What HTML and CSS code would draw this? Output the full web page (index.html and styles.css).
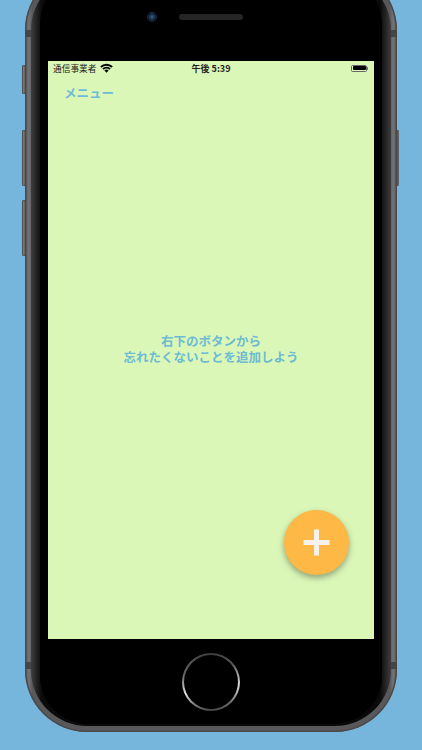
FILE: index.html
```html
<!DOCTYPE html>
<html lang="ja">
<head>
  <meta charset="UTF-8">
  <title>メニュー</title>
  <link rel="stylesheet" href="styles.css">
</head>
<body>

  <div class="phone">
    <div class="side-btn btn-mute"></div>
    <div class="side-btn btn-up"></div>
    <div class="side-btn btn-down"></div>
    <div class="side-btn btn-power"></div>
    <div class="band band-top"></div>
    <div class="band band-bottom"></div>

    <div class="phone-mid">
      <div class="phone-inner">
        <div class="top-bezel">
          <div class="camera"></div>
          <div class="speaker"></div>
        </div>

        <div class="screen">
          <div class="status-bar">
            <div class="status-left">
              <span>通信事業者</span>
              <svg class="wifi" width="13" height="10" viewBox="0 0 13 10">
                <path d="M0.2 3.3 A8.9 8.9 0 0 1 12.8 3.3 L11.4 4.7 A6.9 6.9 0 0 0 1.6 4.7 Z" fill="#000"/>
                <path d="M2.3 5.4 A5.9 5.9 0 0 1 10.7 5.4 L9.3 6.8 A3.9 3.9 0 0 0 3.7 6.8 Z" fill="#000"/>
                <path d="M4.4 7.5 A3 3 0 0 1 8.6 7.5 L6.5 9.7 Z" fill="#000"/>
              </svg>
            </div>
            <div class="status-time">午後 5:39</div>
            <div class="battery"><div class="battery-fill"></div></div>
          </div>

          <div class="nav-bar">
            <a class="menu-link">メニュー</a>
          </div>

          <p class="empty-message">右下のボタンから<br>忘れたくないことを追加しよう</p>

          <!-- 追加ボタン -->
          <div class="add-btn">
            <svg width="27" height="27" viewBox="0 0 27 27">
              <rect x="0.5" y="11" width="26" height="5" fill="#f6f1ea"/>
              <rect x="11" y="0.5" width="5" height="26" fill="#f6f1ea"/>
            </svg>
          </div>
        </div>

        <div class="bottom-bezel">
          <div class="home-btn"></div>
        </div>
      </div>
    </div>
  </div>

</body>
</html>
```

FILE: styles.css
```css
html, body {
  height: 100%;
}

body {
  margin: 0;
  background-color: #76b5dc;
  overflow: hidden;
  font-family: "Noto Sans CJK JP", "Liberation Sans", sans-serif;
}

p {
  margin: 0;
}

.phone {
  position: relative;
  box-sizing: border-box;
  width: 372px;
  height: 764px;
  margin: -32px 0 0 25px;
  padding: 6px;
  border-radius: 62px;
  background: linear-gradient(90deg, #58585a, #737376 1%, #58585a 2%, #58585a 98%, #737376 99%, #58585a);
  box-shadow: inset 0 0 0 1.5px #4a4a4c;
}

.phone-mid {
  height: 100%;
  padding: 2px 9px;
  box-sizing: border-box;
  border-radius: 56px;
  background: linear-gradient(90deg, #3e3e3f, #0a0a0a 3%, #0a0a0a 97%, #3e3e3f);
}

.phone-inner {
  display: flex;
  flex-direction: column;
  align-items: center;
  height: 100%;
  background-color: #000;
  border-radius: 48px;
}

.band {
  position: absolute;
  left: 0;
  right: 0;
  height: 7px;
  border-left: 6px solid #454547;
  border-right: 6px solid #454547;
  box-sizing: border-box;
}

.band-top {
  top: 62px;
}

.band-bottom {
  top: 694px;
}

.side-btn {
  position: absolute;
  width: 3px;
  border-radius: 2px 0 0 2px;
  background: linear-gradient(90deg, #5a5a5c, #98989b);
  box-shadow: inset 0 0 0 0.5px #3c3c3e;
}

.btn-mute {
  left: -3px;
  top: 97px;
  height: 29px;
}

.btn-up {
  left: -3px;
  top: 162px;
  height: 56px;
}

.btn-down {
  left: -3px;
  top: 232px;
  height: 56px;
}

.btn-power {
  right: -2px;
  top: 162px;
  width: 2px;
  height: 56px;
  border-radius: 0 2px 2px 0;
}

/* Zona superior del telefono */
.top-bezel {
  display: flex;
  align-items: center;
  justify-content: center;
  gap: 23px;
  width: 100%;
  height: 85px;
  padding: 0 31px 3px 0;
  box-sizing: border-box;
}

.camera {
  width: 8px;
  height: 8px;
  border-radius: 50%;
  background: radial-gradient(circle, #3b5f8c 0, #0a1a30 70%);
  box-shadow: 0 0 0 1px #1a2c44;
}

.speaker {
  width: 64px;
  height: 6px;
  border-radius: 3px;
  background-color: #252525;
}

.screen {
  position: relative;
  display: flex;
  flex-direction: column;
  width: 326px;
  height: 578px;
  flex-shrink: 0;
  background-color: #dbf7b8;
}

.status-bar {
  position: relative;
  display: flex;
  align-items: center;
  justify-content: space-between;
  height: 14px;
  padding: 0 7px 0 5px;
  color: #222;
  font-size: 8.7px;
}

.status-left {
  display: flex;
  align-items: center;
  gap: 4px;
}

.status-time {
  position: absolute;
  left: 0;
  right: 0;
  text-align: center;
  font-size: 9px;
  font-weight: 700;
}

.battery {
  position: relative;
  box-sizing: border-box;
  width: 16px;
  height: 7px;
  padding: 0.5px;
  border: 0.5px solid #666;
  border-radius: 1.5px;
}

.battery::after {
  content: "";
  position: absolute;
  right: -2px;
  top: 1.5px;
  width: 1px;
  height: 3px;
  background-color: #777;
}

.battery-fill {
  height: 100%;
  background-color: #000;
  border-radius: 1px;
}

.nav-bar {
  display: flex;
  align-items: center;
  height: 34px;
  padding-left: 16px;
}

.menu-link {
  color: #6dbbd9;
  font-size: 12.5px;
  font-weight: 700;
}

.empty-message {
  margin-top: 224px;
  text-align: center;
  color: #6dbbd3;
  font-size: 12.5px;
  font-weight: 700;
  line-height: 16px;
}

.add-btn {
  position: absolute;
  right: 25px;
  bottom: 64px;
  display: flex;
  align-items: center;
  justify-content: center;
  width: 65px;
  height: 65px;
  border-radius: 50%;
  background-color: #fdb845;
  box-shadow: 0 3px 6px rgba(0, 0, 0, 0.35);
}

.bottom-bezel {
  display: flex;
  justify-content: center;
  padding-top: 14px;
}

.home-btn {
  display: flex;
  box-sizing: border-box;
  width: 58px;
  height: 58px;
  padding: 2px;
  border-radius: 50%;
  background: conic-gradient(#3c3c3c 0deg, #555 50deg, #ddd 95deg, #666 140deg, #444 180deg, #777 215deg, #e0e0e0 245deg, #666 285deg, #3c3c3c 360deg);
}

.home-btn::before {
  content: "";
  flex: 1;
  border-radius: 50%;
  background-color: #000;
}
```
